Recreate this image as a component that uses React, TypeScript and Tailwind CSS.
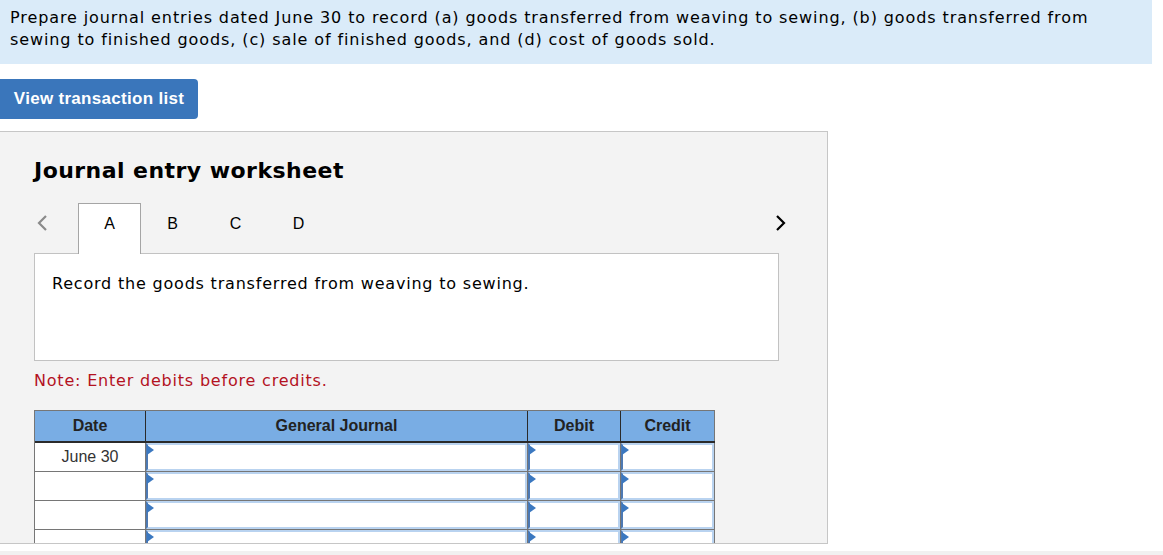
// App.tsx - Hoja de asiento contable con pestañas y tabla de diario general.
const verdana = "font-['DejaVu_Sans',Verdana,sans-serif]";
const arial = "font-['Liberation_Sans',Arial,sans-serif]";

function Chevron({ dir, className }: { dir: "left" | "right"; className?: string }) {
  return (
    <svg width="12" height="18" viewBox="0 0 12 18" className={className}>
      {dir === "left" ? (
        <polyline points="10,2 3,9 10,16" fill="none" stroke="currentColor" strokeWidth="2.2" />
      ) : (
        <polyline points="2,2 9,9 2,16" fill="none" stroke="currentColor" strokeWidth="2.2" />
      )}
    </svg>
  );
}

function InputCell({ width }: { width: string }) {
  return (
    <div className={`${width} relative h-full border-r border-b border-[#767676] bg-[#767676] p-0`}>
      <div className="h-full w-full border-2 border-[#b9d3f0] border-l-[#4d79b3] bg-white" />
      <svg width="7" height="10" viewBox="0 0 7 10" className="absolute left-[1px] top-[2px]">
        <polygon points="0,0 7,5 0,10" fill="#3b78c0" />
      </svg>
    </div>
  );
}

const rows = ["June 30", "", "", ""];

export default function App() {
  return (
    <div className="h-[555px] w-full overflow-hidden bg-white">
      <div className={`${verdana} h-16 w-[1152px] bg-[#daebf9] px-[10px] pt-[7px] text-[16px] leading-[22px] tracking-[0.9px] text-black`}>
        Prepare journal entries dated June 30 to record (a) goods transferred from weaving to sewing, (b) goods transferred from sewing to finished goods, (c) sale of finished goods, and (d) cost of goods sold.
      </div>

      <button
        type="button"
        className={`${arial} mt-[15px] h-10 w-[198px] rounded-r-[4px] bg-[#3a76bb] text-[17px] font-bold tracking-[0.3px] text-white`}
      >
        View transaction list
      </button>

      <section className="mt-3 h-[413px] w-[828px] overflow-hidden border border-l-0 border-[#c6c6c6] bg-[#f3f3f3] pl-[34px]">
        <h2 className={`${verdana} pt-[25px] text-[22px] font-bold leading-[28px] tracking-[0.45px] text-black`}>Journal entry worksheet</h2>

        <div className="mt-[18px] flex h-[51px] w-[745px] items-stretch">
          <div className="flex w-[44px] items-start pl-[2px] pt-[11px] text-[#8a8a8a]">
            <Chevron dir="left" />
          </div>
          <div className="flex">
            <div className={`${arial} relative z-10 flex w-[63px] justify-center border border-b-0 border-[#a5a5a5] bg-white pt-[8px] text-[16px] text-black`}>
              A
            </div>
            {["B", "C", "D"].map((t) => (
              <div key={t} className={`${arial} flex w-[63px] justify-center pt-[9px] text-[16px] text-black`}>
                {t}
              </div>
            ))}
          </div>
          <div className="ml-auto flex items-start pt-[11px] text-black">
            <Chevron dir="right" className="mr-[-8px]" />
          </div>
        </div>

        <div className={`${verdana} -mt-px h-[108px] w-[745px] border border-[#c2c2c2] bg-white px-[17px] pt-[18px] text-[16px] tracking-[0.8px] text-black`}>
          Record the goods transferred from weaving to sewing.
        </div>

        <p className={`${verdana} mt-[9px] text-[16px] leading-[22px] tracking-[0.8px] text-[#b3121f]`}>Note: Enter debits before credits.</p>

        <div className="mt-[18px] w-[681px] border-t border-l border-[#767676]">
          <div className={`${arial} flex h-[32px] border-b-2 border-[#2a2a2a] bg-[#79ade4] text-[16px] font-bold text-[#222]`}>
            <div className="flex w-[111px] items-center justify-center border-r border-[#2a2a2a]">Date</div>
            <div className="flex w-[382px] items-center justify-center border-r border-[#2a2a2a]">General Journal</div>
            <div className="flex w-[93px] items-center justify-center border-r border-[#2a2a2a]">Debit</div>
            <div className="flex w-[94px] items-center justify-center border-r border-[#767676]">Credit</div>
          </div>
          {rows.map((d, i) => (
            <div key={i} className="flex h-[29px]">
              <div className={`${arial} flex w-[111px] items-center justify-center border-r border-b border-[#767676] bg-white text-[16px] text-[#333]`}>
                {d}
              </div>
              <InputCell width="w-[382px]" />
              <InputCell width="w-[93px]" />
              <InputCell width="w-[94px]" />
            </div>
          ))}
        </div>
      </section>

      <div className="mt-[7px] h-[4px] w-full bg-[#f1f1f1]" />
    </div>
  );
}
